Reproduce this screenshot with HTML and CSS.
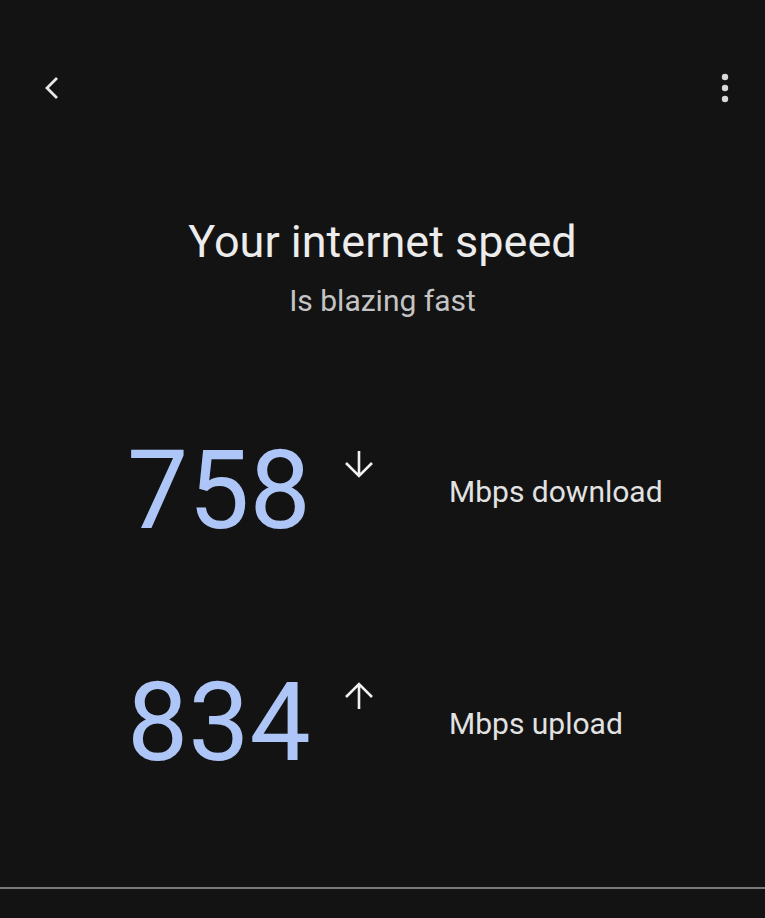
FILE: index.html
```html
<!DOCTYPE html>
<html lang="en">
<head>
    <meta charset="UTF-8">
    <meta name="viewport" content="width=device-width, initial-scale=1.0">
    <title>Internet speed</title>
    <link rel="stylesheet" href="styles.css">
</head>
<body>
    <!-- Верхняя панель -->
    <div class="top-bar">
        <button class="icon-btn" aria-label="Back">
            <svg width="24" height="24" viewBox="0 0 24 24">
                <path d="M17 2 L7 12 L17 22" fill="none" stroke="#e8e8e8" stroke-width="2.8"/>
            </svg>
        </button>
        <button class="icon-btn" aria-label="More">
            <svg width="24" height="30" viewBox="0 0 24 30">
                <circle cx="12" cy="4" r="3.2" fill="#d8d8d8"/>
                <circle cx="12" cy="15" r="3.2" fill="#d8d8d8"/>
                <circle cx="12" cy="26" r="3.2" fill="#d8d8d8"/>
            </svg>
        </button>
    </div>

    <div class="heading">
        <h1>Your internet speed</h1>
        <p>Is blazing fast</p>
    </div>

    <!-- Результаты -->
    <div class="results">
        <div class="stat">
            <span class="value">758</span>
            <svg class="arrow" width="32" height="30" viewBox="0 0 32 30">
                <path d="M16 2 V27 M3 14 L16 27 L29 14" fill="none" stroke="#f0f0f0" stroke-width="2.6"/>
            </svg>
            <span class="label">Mbps download</span>
        </div>
        <div class="stat">
            <span class="value">834</span>
            <svg class="arrow" width="32" height="30" viewBox="0 0 32 30">
                <path d="M16 28 V3 M3 16 L16 3 L29 16" fill="none" stroke="#f0f0f0" stroke-width="2.6"/>
            </svg>
            <span class="label">Mbps upload</span>
        </div>
    </div>

    <div class="divider"></div>
</body>
</html>
```

FILE: styles.css
```css
/* Основные стили */
body {
    margin: 0;
    height: 918px;
    background-color: #131313;
    font-family: Roboto, "Noto Sans", sans-serif;
    color: #e6e6e6;
    display: flex;
    flex-direction: column;
}
.top-bar {
    display: flex;
    justify-content: space-between;
    align-items: center;
    padding: 73px 28px 0 40px;
}
.icon-btn {
    background: none;
    border: none;
    padding: 0;
    display: flex;
    cursor: pointer;
}
.heading {
    text-align: center;
    margin-top: 112px;
}
.heading h1 {
    margin: 0;
    font-size: 45px;
    font-weight: 400;
    line-height: 54px;
    color: #ececec;
}
.heading p {
    margin: 14px 0 0;
    font-size: 30px;
    line-height: 36px;
    color: #c4c4c4;
}
.results {
    margin-top: 97px;
    display: flex;
    flex-direction: column;
    gap: 82px;
    padding-left: 127px;
}
.stat {
    display: flex;
    align-items: center;
}
.value {
    width: 216px;
    font-size: 109px;
    line-height: 150px;
    color: #aec6f7;
}
.arrow {
    align-self: flex-start;
    margin-top: 33px;
}
.label {
    margin-left: 74px;
    font-size: 30px;
    color: #e2e2e2;
}
.divider {
    margin-top: auto;
    margin-bottom: 29px;
    height: 2px;
    background-color: #7a7a7a;
}
```
